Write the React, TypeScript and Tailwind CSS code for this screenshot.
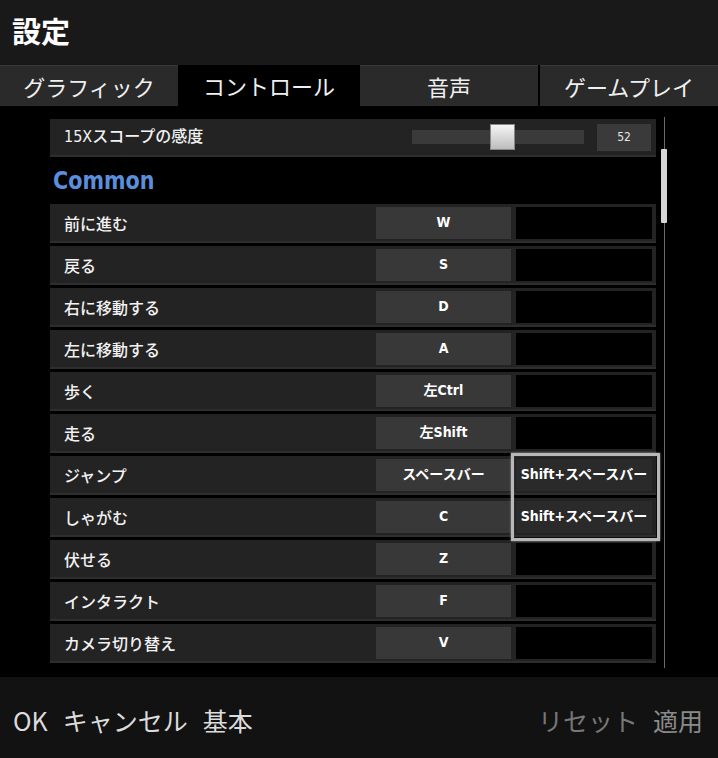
import React from "react";

interface Binding {
  label: string;
  key1: string;
  key2?: string;
}

const bindings: Binding[] = [
  { label: "前に進む", key1: "W" },
  { label: "戻る", key1: "S" },
  { label: "右に移動する", key1: "D" },
  { label: "左に移動する", key1: "A" },
  { label: "歩く", key1: "左Ctrl" },
  { label: "走る", key1: "左Shift" },
  { label: "ジャンプ", key1: "スペースバー", key2: "Shift+スペースバー" },
  { label: "しゃがむ", key1: "C", key2: "Shift+スペースバー" },
  { label: "伏せる", key1: "Z" },
  { label: "インタラクト", key1: "F" },
  { label: "カメラ切り替え", key1: "V" },
];

const jp = { fontFamily: '"Noto Sans CJK JP", sans-serif' };
const cond = { fontFamily: '"DejaVu Sans Condensed", "Noto Sans CJK JP", sans-serif' };

const tabs = [
  { name: "グラフィック", w: "w-[178px]", active: false },
  { name: "コントロール", w: "w-[182px]", active: true },
  { name: "音声", w: "w-[178px]", active: false },
  { name: "ゲームプレイ", w: "flex-1 ml-[2px]", active: false },
];

const KeyRow: React.FC<{ item: Binding }> = ({ item }) => {
  return (
    <div className="h-[39px] mb-[3px] flex items-center bg-[#232323] border-b-2 border-[#2e2e2e]">
      <div className="w-[326px] pl-[14px] text-[16px] text-[#f2f2f2] font-medium" style={jp}>
        {item.label}
      </div>
      <div
        className="w-[135px] h-[32px] flex items-center justify-center bg-[#383838] text-[14px] text-white font-semibold"
        style={cond}
      >
        {item.key1}
      </div>
      <div
        className={
          "ml-[5px] w-[136px] h-[32px] flex items-center justify-center text-[14px] text-white font-semibold " +
          (item.key2 ? "bg-[#2a2a2a]" : "bg-black")
        }
        style={cond}
      >
        {item.key2}
      </div>
    </div>
  );
};

const App: React.FC = () => {
  return (
    <div className="w-[718px] h-[758px] bg-black flex flex-col overflow-hidden" style={jp}>
      {/* Header */}
      <div className="h-[65px] bg-[#1a191a] flex items-center pl-[12px] pb-[4px]">
        <h1 className="text-[29px] font-bold text-white leading-none">設定</h1>
      </div>

      {/* Tabs */}
      <div className="h-[41px] flex bg-black">
        {tabs.map((t) => (
          <div
            key={t.name}
            className={
              t.w +
              " flex items-center justify-center text-[22px] text-[#f0f0f0] " +
              (t.active ? "bg-black" : "bg-[#2a2a2a] border-t border-[#3a3a3a]")
            }
          >
            {t.name}
          </div>
        ))}
      </div>

      {/* Content */}
      <div className="relative flex-1 bg-black">
        <div className="ml-[50px] w-[606px] pt-[13px]">
          {/* Sensitivity slider row */}
          <div className="h-[38px] flex items-center bg-[#232323] border-b-2 border-[#2e2e2e]">
            <div className="flex-1 pl-[14px] text-[16px] text-[#f2f2f2] font-medium" style={cond}>
              15Xスコープの感度
            </div>
            <div className="relative w-[172px] h-[14px] bg-[#3a3a3a]">
              <div className="absolute left-[78px] top-[-6px] w-[25px] h-[26px] bg-gradient-to-b from-[#f5f5f5] to-[#bdbdbd] border border-[#888]" />
            </div>
            <div
              className="ml-[13px] mr-[5px] w-[54px] h-[27px] flex items-center justify-center bg-[#3a3a3a] text-[12px] text-[#e6e6e6]"
              style={cond}
            >
              52
            </div>
          </div>

          {/* Section header */}
          <div className="h-[47px] flex items-center pl-[3px]">
            <span className="text-[23px] font-bold text-[#5b8fdc] inline-block scale-y-110" style={cond}>
              Common
            </span>
          </div>

          {bindings.map((b) => (
            <KeyRow key={b.label} item={b} />
          ))}
        </div>

        {/* Highlight box around secondary bindings */}
        <div className="absolute left-[511px] top-[347px] w-[149px] h-[88px] border-[3px] border-[#b8b8b8] shadow-[0_0_2px_#999,inset_0_0_1px_#777]" />

        {/* Scrollbar */}
        <div className="absolute left-[664px] top-[11px] w-px h-[551px] bg-[#6a6a6a]" />
        <div className="absolute left-[661px] top-[43px] w-[6px] h-[74px] bg-[#d6d6d6] rounded-[1px]" />
      </div>

      {/* Footer */}
      <div className="h-[81px] bg-[#121212] flex items-center justify-between pl-[13px] pr-[15px] pt-[6px] text-[25px]">
        <div className="flex items-center gap-[15px] text-[#dcdcdc]">
          <span>OK</span>
          <span>キャンセル</span>
          <span>基本</span>
        </div>
        <div className="flex items-center gap-[15px]">
          <span className="text-[#777]">リセット</span>
          <span className="text-[#8a8a8a]">適用</span>
        </div>
      </div>
    </div>
  );
};

export default App;
